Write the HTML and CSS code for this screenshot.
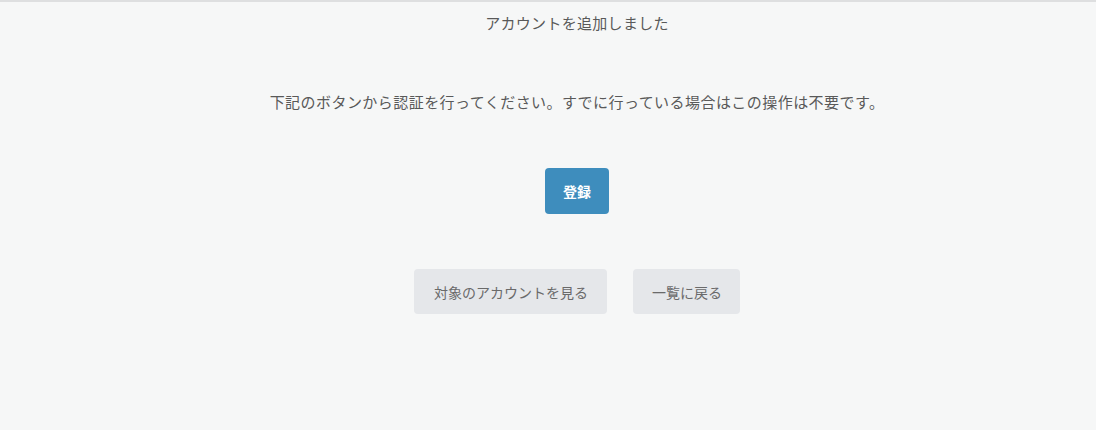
FILE: index.html
```html
<!DOCTYPE html>
<html lang="ja">
<head>
  <meta charset="UTF-8" />
  <title>アカウントを追加しました</title>
  <link rel="stylesheet" href="styles.css">
</head>
<body>
  <div class="page">
    <h1 class="title">アカウントを追加しました</h1>
    <p class="message">下記のボタンから認証を行ってください。すでに行っている場合はこの操作は不要です。</p>
    <div class="main-action">
      <button class="btn btn-primary">登録</button>
    </div>
    <div class="sub-actions">
      <button class="btn btn-light btn-wide">対象のアカウントを見る</button>
      <button class="btn btn-light">一覧に戻る</button>
    </div>
  </div>
</body>
</html>
```

FILE: styles.css
```css
html, body {
  margin: 0;
  height: 100%;
}
body {
  font-family: "Noto Sans CJK JP", "Noto Sans", sans-serif;
  background-color: #f6f7f7;
  color: #595959;
  border-top: 2px solid #dedfe0;
  box-sizing: border-box;
}
.page {
  display: flex;
  flex-direction: column;
  align-items: center;
  padding-left: 58px;
}
.title {
  margin: 10px 0 0;
  font-size: 15px;
  font-weight: normal;
  line-height: 22px;
  letter-spacing: 0.3px;
}
.message {
  margin: 57px 0 0;
  font-size: 15px;
  line-height: 22px;
  letter-spacing: 0.45px;
}
.main-action {
  margin-top: 55px;
}
.sub-actions {
  margin-top: 55px;
  display: flex;
  gap: 26px;
}
.btn {
  font-family: inherit;
  font-size: 14px;
  border: none;
  border-radius: 4px;
  cursor: pointer;
  line-height: 20px;
}
.btn-primary {
  background-color: #3e8dbd;
  color: #fff;
  font-weight: bold;
  height: 46px;
  padding: 0 18px;
}
.btn-light {
  background-color: #e5e7ea;
  color: #6a6a6a;
  height: 45px;
  padding: 0 18px 0 19px;
}
.btn-wide {
  padding: 0 19px 0 20px;
}
```
